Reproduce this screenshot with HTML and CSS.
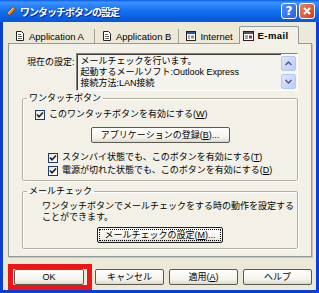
FILE: index.html
```html
<!DOCTYPE html>
<html lang="ja">
<head>
    <meta charset="UTF-8">
    <title>ワンタッチボタンの設定</title>
    <link rel="stylesheet" href="styles.css">
</head>
<body>
    <div class="window">
        <div class="titlebar">
            <svg class="title-icon" width="12" height="12" viewBox="0 0 12 12">
                <path d="M2 8.5 L8 1.5 L10.8 3.8 L4.6 10.8 Z" fill="#E2801F" stroke="#7A3A0A" stroke-width="0.8"/>
                <path d="M3.2 8.2 L8.3 2.6" stroke="#FFE0A0" stroke-width="1"/>
                <path d="M0.8 11.4 L2 8.5 L4.6 10.8 Z" fill="#3456C8"/>
            </svg>
            <span class="title-text">ワンタッチボタンの設定</span>
            <div class="title-buttons">
                <span class="tbtn help">?</span>
                <span class="tbtn close">
                    <svg width="10" height="10" viewBox="0 0 10 10"><path d="M2 2 L8 8 M8 2 L2 8" stroke="#fff" stroke-width="2"/></svg>
                </span>
            </div>
        </div>

        <div class="client">
            <div class="tabs">
                <div class="tab">
                    <svg width="10" height="10" viewBox="0 0 10 10"><path d="M1.5 0.5h5l2 2v7h-7z" fill="#fff" stroke="#222"/><path d="M3 3.5h3M3 5.5h4M3 7.5h4" stroke="#666"/></svg>
                    <span>Application A</span>
                </div>
                <div class="tab">
                    <svg width="10" height="10" viewBox="0 0 10 10"><path d="M1.5 0.5h5l2 2v7h-7z" fill="#fff" stroke="#222"/><path d="M3 3.5h3M3 5.5h4M3 7.5h4" stroke="#666"/></svg>
                    <span>Application B</span>
                </div>
                <div class="tab">
                    <svg width="10" height="10" viewBox="0 0 10 10"><rect x="0.5" y="0.5" width="9" height="9" fill="#fff" stroke="#222"/><rect x="1" y="1" width="8" height="2" fill="#2B55B5"/><path d="M2 5h2M2 7h2" stroke="#555"/><rect x="5" y="4.5" width="3" height="3" fill="#8A8A8A"/></svg>
                    <span>Internet</span>
                </div>
                <div class="tab active">
                    <svg width="11" height="10" viewBox="0 0 11 10"><rect x="0.5" y="0.5" width="10" height="9" fill="#fff" stroke="#222"/><rect x="1" y="1" width="9" height="2" fill="#555"/><path d="M2 5h3M2 7h3" stroke="#444"/><rect x="6" y="4.5" width="3" height="3" fill="#B03030"/></svg>
                    <span>E-mail</span>
                </div>
            </div>

            <div class="panel">
                <div class="current">
                    <span class="current-label">現在の設定:</span>
                    <div class="textbox">
                        <div class="textbox-lines">
                            <div>メールチェックを行います。</div>
                            <div>起動するメールソフト:Outlook Express</div>
                            <div>接続方法:LAN接続</div>
                        </div>
                        <div class="scrollbar">
                            <span class="arrow">
                                <svg width="7" height="5" viewBox="0 0 7 5"><path d="M0.5 4 L3.5 1 L6.5 4" fill="none" stroke="#4D6185" stroke-width="1.5"/></svg>
                            </span>
                            <span class="arrow">
                                <svg width="7" height="5" viewBox="0 0 7 5"><path d="M0.5 1 L3.5 4 L6.5 1" fill="none" stroke="#4D6185" stroke-width="1.5"/></svg>
                            </span>
                        </div>
                    </div>
                </div>

                <fieldset class="group onetouch">
                    <legend>ワンタッチボタン</legend>
                    <div class="check first">
                        <span class="box"><svg width="8" height="8" viewBox="0 0 8 8"><path d="M1 3.5 L3 5.8 L7 1.5" fill="none" stroke="#1E1E1E" stroke-width="1.6"/></svg></span>
                        <span>このワンタッチボタンを有効にする(<u>W</u>)</span>
                    </div>
                    <div class="center">
                        <button class="btn register">アプリケーションの登録(<u>B</u>)...</button>
                    </div>
                    <div class="check sub standby">
                        <span class="box"><svg width="8" height="8" viewBox="0 0 8 8"><path d="M1 3.5 L3 5.8 L7 1.5" fill="none" stroke="#1E1E1E" stroke-width="1.6"/></svg></span>
                        <span>スタンバイ状態でも、このボタンを有効にする(<u>T</u>)</span>
                    </div>
                    <div class="check sub">
                        <span class="box"><svg width="8" height="8" viewBox="0 0 8 8"><path d="M1 3.5 L3 5.8 L7 1.5" fill="none" stroke="#1E1E1E" stroke-width="1.6"/></svg></span>
                        <span>電源が切れた状態でも、このボタンを有効にする(<u>D</u>)</span>
                    </div>
                </fieldset>

                <fieldset class="group mailcheck">
                    <legend>メールチェック</legend>
                    <p class="note">ワンタッチボタンでメールチェックをする時の動作を設定する<br>ことができます。</p>
                    <div class="center">
                        <button class="btn mail-settings">メールチェックの設定(<u>M</u>)...</button>
                    </div>
                </fieldset>
            </div>

            <div class="actions">
                <span class="ok-mark"><button class="btn ok">OK</button></span>
                <button class="btn">キャンセル</button>
                <button class="btn">適用(<u>A</u>)</button>
                <button class="btn">ヘルプ</button>
            </div>
        </div>
    </div>
</body>
</html>
```

FILE: styles.css
```css
body {
    margin: 0;
    font-family: "Liberation Sans", "Noto Sans CJK JP", sans-serif;
    font-size: 9px;
    line-height: 11px;
    color: #000;
}
.window {
    width: 319px;
    height: 293px;
    display: flex;
    flex-direction: column;
    background-color: #0A3FD4;
    overflow: hidden;
}
.titlebar {
    height: 22px;
    flex-shrink: 0;
    display: flex;
    align-items: center;
    padding-left: 5px;
    background: linear-gradient(to bottom, #0A5AE6 0%, #3D93FF 10%, #2C84F8 25%, #1470EE 50%, #0A62E4 75%, #0855DA 100%);
}
.title-icon {
    margin-right: 3px;
}
.title-text {
    font-family: "Noto Sans CJK JP", sans-serif;
    font-size: 10px;
    font-weight: bold;
    letter-spacing: -1px;
    color: #fff;
    text-shadow: 1px 1px 0 #0B2A8C;
}
.title-buttons {
    margin-left: auto;
    padding-right: 4px;
    display: flex;
    gap: 2px;
}
.tbtn {
    width: 16px;
    height: 16px;
    box-sizing: border-box;
    border: 1px solid #fff;
    border-radius: 3px;
    display: flex;
    align-items: center;
    justify-content: center;
    color: #fff;
    font-family: "DejaVu Sans", sans-serif;
    font-weight: bold;
    font-size: 12px;
}
.tbtn.help {
    background: linear-gradient(135deg, #4E8DF8, #2562E0);
}
.tbtn.close {
    background: linear-gradient(135deg, #E8815E, #D3411D);
}
.client {
    flex: 1;
    margin: 0 3px 3px;
    padding: 4px 4px 0 5px;
    background-color: #ECE9D8;
}
.tabs {
    display: flex;
    align-items: flex-end;
    height: 17px;
    font-size: 9.5px;
}
.tab {
    display: flex;
    align-items: center;
    gap: 4px;
    height: 14px;
    padding: 0 10px 0 7px;
    border-right: 1px solid #A5A293;
}
.tab:nth-child(2) {
    padding-right: 7px;
}
.tab:nth-child(3) {
    border-right: none;
    padding-right: 6px;
}
.tab.active {
    position: relative;
    z-index: 1;
    height: 17px;
    margin-bottom: -1px;
    padding: 0 9px 0 3px;
    background-color: #F2F0E7;
    border: 1px solid #919B9C;
    border-bottom: none;
    border-radius: 2px 2px 0 0;
    font-weight: bold;
    letter-spacing: 0.4px;
}
.panel {
    height: 214px;
    box-sizing: border-box;
    padding: 0 13px;
    background-color: #F2F0E7;
    border: 1px solid #919B9C;
    box-shadow: 1px 1px 0 #C9C6B5;
}
.current {
    display: flex;
    margin-top: 9px;
}
.current-label {
    padding: 4px 1px 0 5px;
}
.textbox {
    flex: 1;
    height: 38px;
    box-sizing: border-box;
    display: flex;
    background-color: #F4F3EE;
    border: 1px solid;
    border-color: #808080 #fff #fff #808080;
    box-shadow: inset 1px 1px 0 #404040;
}
.textbox-lines {
    flex: 1;
    padding: 2px 0 0 4px;
    white-space: nowrap;
    overflow: hidden;
}
.scrollbar {
    width: 15px;
    display: flex;
    flex-direction: column;
    justify-content: space-between;
    padding: 2px 1px 1px 0;
    background-color: #F7F7F3;
}
.arrow {
    height: 13px;
    display: flex;
    align-items: center;
    justify-content: center;
    background: linear-gradient(135deg, #DDE7FD, #B9CCF7);
    border: 1px solid #B4C8F6;
    border-radius: 2px;
}
.group {
    margin: 0;
    padding: 0;
    border: 1px solid #B2B09F;
    border-radius: 2px;
    box-shadow: inset 1px 1px 0 #fff, 1px 1px 0 #fff;
}
.group legend {
    margin-left: 4px;
    padding: 0 2px;
    line-height: 11px;
}
.onetouch {
    margin-top: 2px;
    padding-bottom: 4px;
}
.check {
    display: flex;
    align-items: center;
    gap: 4px;
    margin-left: 12px;
    white-space: nowrap;
}
.check.first {
    margin-top: 5px;
}
.check.sub {
    margin-left: 25px;
    margin-top: 2px;
}
.check.standby {
    margin-top: 9px;
}
.box {
    width: 10px;
    height: 10px;
    box-sizing: border-box;
    display: flex;
    align-items: center;
    justify-content: center;
    background: linear-gradient(135deg, #E6E6DF, #fff);
    border: 1px solid #1C3B62;
}
.center {
    display: flex;
    justify-content: center;
}
.btn {
    height: 16px;
    box-sizing: border-box;
    padding: 0;
    font-family: "Liberation Sans", "Noto Sans CJK JP", sans-serif;
    font-size: 9px;
    line-height: 14px;
    color: #000;
    background: linear-gradient(to bottom, #FFFFFF 0%, #F3F2EC 70%, #DCD8CB 100%);
    border: 1px solid #5A5A52;
    border-radius: 2px;
}
.register {
    width: 139px;
    margin-top: 7px;
}
.mailcheck {
    margin-top: 5px;
    padding-bottom: 5px;
}
.note {
    margin: 4px 0 0 19px;
    white-space: nowrap;
}
.mail-settings {
    width: 126px;
    margin-top: 4px;
    border-color: #202020;
    outline: 1px dotted #000;
    outline-offset: -3px;
}
.actions {
    display: flex;
    justify-content: flex-end;
    gap: 5px;
    margin-top: 12px;
}
.actions .btn {
    width: 69px;
}
.ok-mark {
    position: relative;
    margin: 0 auto 0 6px;
    display: flex;
}
.ok-mark .btn {
    width: 70px;
}
.ok-mark::after {
    content: "";
    position: absolute;
    top: -5px;
    bottom: -5px;
    left: -6px;
    right: -8px;
    border: 5px solid #F01414;
}
```
